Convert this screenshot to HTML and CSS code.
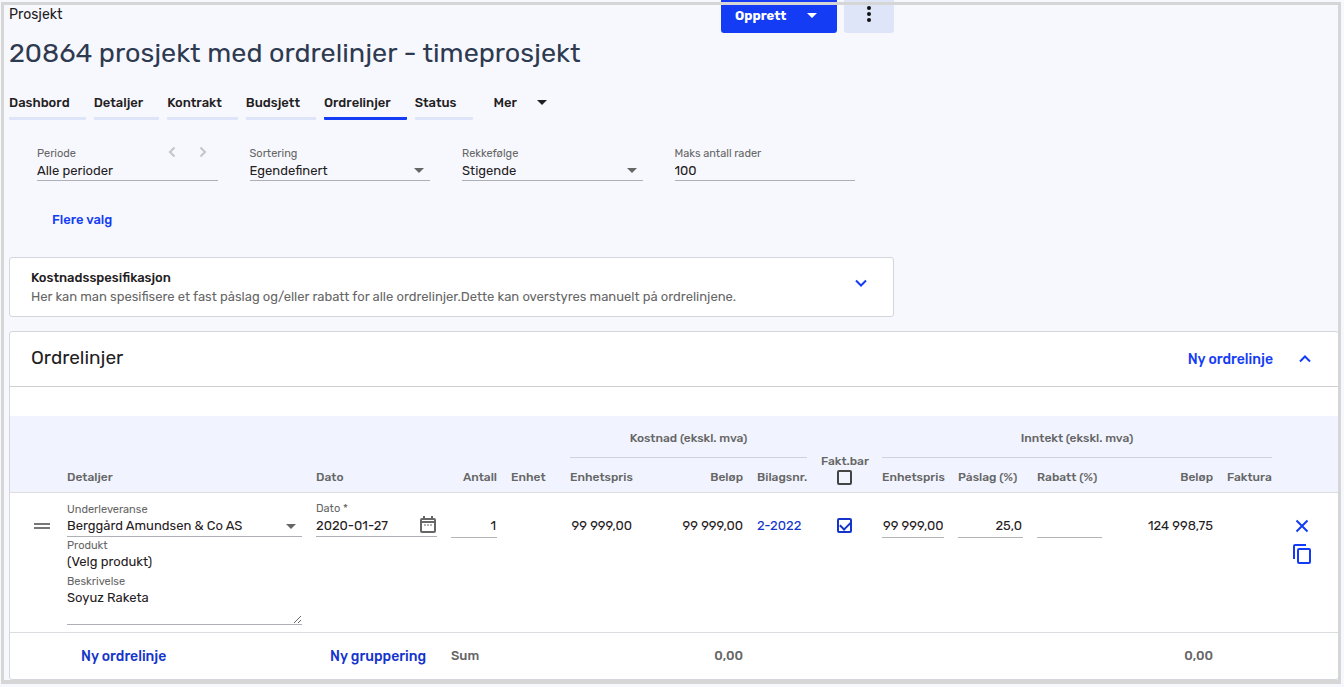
FILE: index.html
```html
<!DOCTYPE html>
<html lang="nb">
<head>
    <meta charset="UTF-8">
    <meta name="viewport" content="width=device-width, initial-scale=1">
    <title>20864 prosjekt med ordrelinjer - timeprosjekt</title>
    <link rel="stylesheet" href="styles.css">
</head>
<body>
    <div class="page">
        <div class="top">
            <header class="header">
                <div class="heading">
                    <div class="crumb">Prosjekt</div>
                    <h1>20864 prosjekt med ordrelinjer - timeprosjekt</h1>
                </div>
                <div class="actions">
                    <button type="button" class="btn-create">Opprett <span class="arrow"></span></button>
                    <button type="button" class="btn-menu" aria-label="Flere handlinger">
                        <svg width="6" height="16" viewBox="0 0 6 16"><circle cx="3" cy="2" r="2"/><circle cx="3" cy="8" r="2"/><circle cx="3" cy="14" r="2"/></svg>
                    </button>
                </div>
            </header>

            <nav class="tabs">
                <a href="#" class="tab">Dashbord</a>
                <a href="#" class="tab">Detaljer</a>
                <a href="#" class="tab">Kontrakt</a>
                <a href="#" class="tab">Budsjett</a>
                <a href="#" class="tab active">Ordrelinjer</a>
                <a href="#" class="tab">Status</a>
                <button type="button" class="tab-more">Mer <span class="arrow"></span></button>
            </nav>

            <!-- Filter -->
            <form class="filters">
                <div class="field">
                    <div class="label-row">
                        <label for="periode">Periode</label>
                        <span class="pager">
                            <button type="button" aria-label="Forrige periode"><svg width="8" height="12" viewBox="0 0 8 12"><path d="M6.500 1.500 2 6l4.500 4.500"/></svg></button>
                            <button type="button" aria-label="Neste periode"><svg width="8" height="12" viewBox="0 0 8 12"><path d="M1.500 1.500 6 6l-4.500 4.500"/></svg></button>
                        </span>
                    </div>
                    <input type="text" id="periode" value="Alle perioder">
                </div>
                <div class="field">
                    <label for="sortering">Sortering</label>
                    <div class="select"><select id="sortering"><option>Egendefinert</option></select></div>
                </div>
                <div class="field">
                    <label for="rekkefolge">Rekkefølge</label>
                    <div class="select"><select id="rekkefolge"><option>Stigende</option></select></div>
                </div>
                <div class="field">
                    <label for="maks">Maks antall rader</label>
                    <input type="text" id="maks" value="100">
                </div>
            </form>
            <button type="button" class="link-btn more-choices">Flere valg</button>

            <section class="card spec">
                <div>
                    <h2>Kostnadsspesifikasjon</h2>
                    <p>Her kan man spesifisere et fast påslag og/eller rabatt for alle ordrelinjer.Dette kan overstyres manuelt på ordrelinjene.</p>
                </div>
                <button type="button" class="toggle" aria-label="Vis kostnadsspesifikasjon"><svg width="12" height="8" viewBox="0 0 12 8"><path d="M1 1.500l5 5 5-5"/></svg></button>
            </section>
        </div>

        <section class="card orders">
            <div class="orders-head">
                <h2>Ordrelinjer</h2>
                <button type="button" class="link-btn">Ny ordrelinje</button>
                <button type="button" class="toggle" aria-label="Skjul ordrelinjer"><svg width="12" height="8" viewBox="0 0 12 8"><path d="M1 6.500l5-5 5 5"/></svg></button>
            </div>

            <table>
                <colgroup>
                    <col class="c-handle"><col class="c-details"><col class="c-date"><col class="c-count"><col class="c-small">
                    <col class="c-price"><col class="c-sum"><col class="c-voucher"><col class="c-check"><col class="c-price">
                    <col class="c-pct"><col class="c-pct"><col class="c-sum"><col class="c-small"><col class="c-small">
                </colgroup>
                <thead>
                    <tr class="groups">
                        <th colspan="5"></th>
                        <th colspan="3"><div class="group">Kostnad (ekskl. mva)</div></th>
                        <th rowspan="2" class="center">
                            <label for="alle">Fakt.bar</label>
                            <input type="checkbox" id="alle">
                        </th>
                        <th colspan="5"><div class="group">Inntekt (ekskl. mva)</div></th>
                        <th></th>
                    </tr>
                    <tr class="names">
                        <th></th>
                        <th>Detaljer</th>
                        <th>Dato</th>
                        <th class="num">Antall</th>
                        <th>Enhet</th>
                        <th class="num">Enhetspris</th>
                        <th class="num">Beløp</th>
                        <th>Bilagsnr.</th>
                        <th class="num">Enhetspris</th>
                        <th>Påslag (%)</th>
                        <th>Rabatt (%)</th>
                        <th class="num">Beløp</th>
                        <th>Faktura</th>
                        <th></th>
                    </tr>
                </thead>
                <tbody>
                    <tr>
                        <td class="center">
                            <svg class="handle" width="16" height="8" viewBox="0 0 16 8"><path d="M0 2h16M0 6h16"/></svg>
                        </td>
                        <td class="stack">
                            <div class="field">
                                <label for="lev">Underleveranse</label>
                                <div class="select"><select id="lev"><option>Berggård Amundsen &amp; Co AS</option></select></div>
                            </div>
                            <div class="field">
                                <label for="produkt">Produkt</label>
                                <input type="text" id="produkt" class="plain" value="(Velg produkt)">
                            </div>
                            <div class="field">
                                <label for="beskrivelse">Beskrivelse</label>
                                <textarea id="beskrivelse">Soyuz Raketa</textarea>
                            </div>
                        </td>
                        <td class="stack">
                            <div class="field date">
                                <label for="dato">Dato *</label>
                                <div class="date-box">
                                    <input type="text" id="dato" value="2020-01-27">
                                    <button type="button" aria-label="Velg dato"><svg width="16" height="18" viewBox="0 0 16 18"><rect x="1" y="3" width="14" height="13" rx="1"/><path d="M1 6h14M4 0v3M12 0v3"/><path class="dots" d="M4 9h2M7 9h2M10 9h2"/></svg></button>
                                </div>
                            </div>
                        </td>
                        <td><input type="text" class="num" aria-label="Antall" value="1"></td>
                        <td></td>
                        <td class="num">99 999,00</td>
                        <td class="num">99 999,00</td>
                        <td><a href="#">2-2022</a></td>
                        <td class="center"><input type="checkbox" aria-label="Fakturerbar" checked></td>
                        <td><input type="text" class="num" aria-label="Enhetspris" value="99 999,00"></td>
                        <td><input type="text" class="num" aria-label="Påslag (%)" value="25,0"></td>
                        <td><input type="text" class="num" aria-label="Rabatt (%)"></td>
                        <td class="num">124 998,75</td>
                        <td></td>
                        <td class="row-actions">
                            <button type="button" aria-label="Slett"><svg width="14" height="14" viewBox="0 0 14 14"><path d="M1.500 1.500l11 11M12.500 1.500l-11 11"/></svg></button>
                            <button type="button" aria-label="Kopier"><svg width="18" height="20" viewBox="0 0 18 20"><path d="M1 15V2a1 1 0 0 1 1-1h11"/><rect x="5" y="5" width="12" height="14" rx="1"/></svg></button>
                        </td>
                    </tr>
                </tbody>
                <tfoot>
                    <tr>
                        <td></td>
                        <td><button type="button" class="link-btn dark">Ny ordrelinje</button></td>
                        <td><button type="button" class="link-btn dark">Ny gruppering</button></td>
                        <td colspan="3">Sum</td>
                        <td class="num">0,00</td>
                        <td colspan="5"></td>
                        <td class="num">0,00</td>
                        <td colspan="2"></td>
                    </tr>
                </tfoot>
            </table>
        </section>
    </div>
</body>
</html>
```

FILE: styles.css
```css
* { box-sizing: border-box; }
body {
    margin: 0;
    font-family: Rubik, Roboto, "Liberation Sans", sans-serif;
    font-size: 13px;
    color: #1f2022;
    background: #f7f8fd;
}
/* frame around the whole page */
body::after {
    content: "";
    position: fixed;
    inset: 2px 3px 3px 1px;
    border: 3px solid #d6d6d6;
    border-bottom-width: 4px;
    pointer-events: none;
}
h1, h2, p { margin: 0; font-weight: 400; }
button, input, select, textarea { font: inherit; color: inherit; }
button {
    padding: 0;
    border: none;
    background: none;
    cursor: pointer;
}
svg { display: block; fill: none; stroke: currentColor; stroke-width: 2; }
a { color: #1434cb; text-decoration: none; }

.page { padding: 0 5px 0 9px; }
.top { max-width: 885px; }

.header { display: flex; justify-content: space-between; }
.crumb { padding-top: 5px; font-size: 14px; line-height: 20px; }
h1 {
    margin-top: 8px;
    font-size: 27px;
    line-height: 40px;
    color: #2e3a50;
}
.actions { display: flex; gap: 7px; height: 33px; }
.btn-create {
    display: flex;
    align-items: center;
    justify-content: space-between;
    width: 116px;
    padding: 0 20px 2px 14px;
    border-radius: 0 0 3px 3px;
    background: #143cf5;
    color: white;
    font-weight: 700;
}
.btn-menu {
    display: flex;
    justify-content: center;
    width: 50px;
    padding-top: 6px;
    border-radius: 0 0 3px 3px;
    background: #dfe5f9;
    color: #111;
}
.btn-menu svg { fill: currentColor; stroke: none; }
.arrow {
    border: 5px solid transparent;
    border-top-color: currentColor;
    border-bottom: none;
}

.tabs { display: flex; gap: 8px; margin-top: 20px; }
.tab {
    padding: 0 16px 4px 0;
    border-bottom: 3px solid #dfe5f9;
    border-radius: 1px;
    line-height: 20px;
    font-weight: 500;
    color: #1f2022;
}
.tab.active { border-color: #143cf5; }
.tab-more {
    display: flex;
    align-items: center;
    gap: 20px;
    height: 18px;
    margin-left: 13px;
    font-weight: 500;
}

.filters {
    display: grid;
    grid-template-columns: repeat(4, 1fr);
    gap: 32px;
    padding: 26px 39px 0 28px;
}
.field label {
    display: block;
    padding-top: 2px;
    font-size: 11px;
    line-height: 12px;
    color: #666;
}
.field input, .field select {
    display: block;
    width: 100%;
    height: 21px;
    padding: 0;
    border: none;
    border-bottom: 1px solid #aeb0b6;
    border-radius: 0;
    background: none;
    outline: none;
    appearance: none;
}
.label-row { display: flex; justify-content: space-between; }
.pager { display: flex; gap: 23px; height: 12px; padding-right: 11px; color: #c4c5c9; }
.select { position: relative; }
.select::after {
    content: "";
    position: absolute;
    right: 6px;
    top: 8px;
    border: 5px solid transparent;
    border-top-color: #666;
    border-bottom: none;
    pointer-events: none;
}

.link-btn {
    padding-top: 2px;
    font-size: 14px;
    font-weight: 500;
    line-height: 20px;
    color: #143cf5;
}
.link-btn.dark { margin-left: 14px; color: #1434cb; }
.more-choices { display: block; margin: 27px 0 0 43px; font-size: 13px; }

.card {
    border: 1px solid #d5d6dc;
    border-radius: 3px;
    background: white;
}
.spec {
    display: flex;
    align-items: center;
    justify-content: space-between;
    margin-top: 27px;
    padding: 10px 26px 11px 21px;
}
.spec h2 { font-size: 13px; line-height: 20px; font-weight: 500; }
.spec p { line-height: 17px; color: #666; }
.toggle { color: #143cf5; }
.spec .toggle { margin-bottom: 8px; }

.orders { margin-top: 14px; }
.orders-head {
    display: flex;
    align-items: center;
    gap: 26px;
    height: 55px;
    padding: 0 27px 0 21px;
    border-bottom: 1px solid #cfcfd3;
}
.orders-head h2 { flex: 1; padding-bottom: 4px; font-size: 19px; }

table {
    width: 100%;
    margin-top: 29px;
    table-layout: fixed;
    border-collapse: collapse;
}
.c-handle { width: 50px; }
.c-details { width: 249px; }
.c-date { width: 135px; }
.c-count { width: 60px; }
.c-small { width: 59px; }
.c-price { width: 76px; }
.c-sum { width: 111px; }
.c-voucher { width: 64px; }
.c-check { width: 61px; }
.c-pct { width: 79px; }
th, td { padding: 0 7px; text-align: left; white-space: nowrap; }
th {
    font-size: 12px;
    font-weight: 500;
    color: #666;
}
thead { background: #f1f4fe; border-bottom: 1px solid #dcdde1; }
.groups th { height: 42px; }
.group {
    height: 42px;
    border-bottom: 1px solid #d0d3da;
    line-height: 44px;
    text-align: center;
}
.names th { height: 34px; padding-top: 4px; line-height: 20px; }
.num { text-align: right; }
.center { text-align: center; }
th.center { padding-bottom: 7px; vertical-align: bottom; }
th.center label { display: block; line-height: 17px; }

input[type="checkbox"] {
    display: block;
    width: 15px;
    height: 15px;
    margin: 0 auto;
    border: 2px solid #444;
    border-radius: 2px;
    appearance: none;
}
input[type="checkbox"]:checked { border-color: #1434cb; }
input[type="checkbox"]:checked::after {
    content: "";
    display: block;
    width: 9px;
    height: 5px;
    margin: 2px 1px;
    border: solid #1434cb;
    border-width: 0 0 2px 2px;
    transform: translateY(-1px) rotate(-45deg);
}

tbody td {
    padding-top: 23px;
    vertical-align: top;
    line-height: 20px;
}
tbody td > input[type="text"] {
    display: block;
    width: 100%;
    height: 22px;
    padding: 0 1px 1px;
    border: none;
    border-bottom: 1px solid #b4b4b4;
    background: none;
}
tbody td > input[type="checkbox"] { margin-top: 2px; }
tbody td.stack { padding-top: 9px; padding-bottom: 7px; }
.stack .field { margin-bottom: 1px; }
.stack .field:last-child { margin-bottom: 0; }
.stack .date { margin-top: -1px; }
.field input.plain { border-color: transparent; }
textarea {
    display: block;
    width: 100%;
    height: 37px;
    padding: 0;
    border: none;
    border-bottom: 1px solid #aeb0b6;
    line-height: 19px;
    resize: vertical;
}
.handle { margin: 6px 3px 0 auto; color: #777; }
.date-box { display: flex; border-bottom: 1px solid #aeb0b6; }
.date-box input { height: 21px; border-bottom: none; }
.date-box button { padding: 1px 1px 2px; color: #666; }
.dots { stroke-width: 1; }
tbody td.row-actions { padding-right: 21px; }
.row-actions button { display: block; margin: 3px auto 0; color: #143cf5; }
.row-actions button + button { margin-top: 11px; }

tfoot { border-top: 1px solid #dcdde1; font-weight: 500; color: #666; }
tfoot td { height: 47px; }
```
